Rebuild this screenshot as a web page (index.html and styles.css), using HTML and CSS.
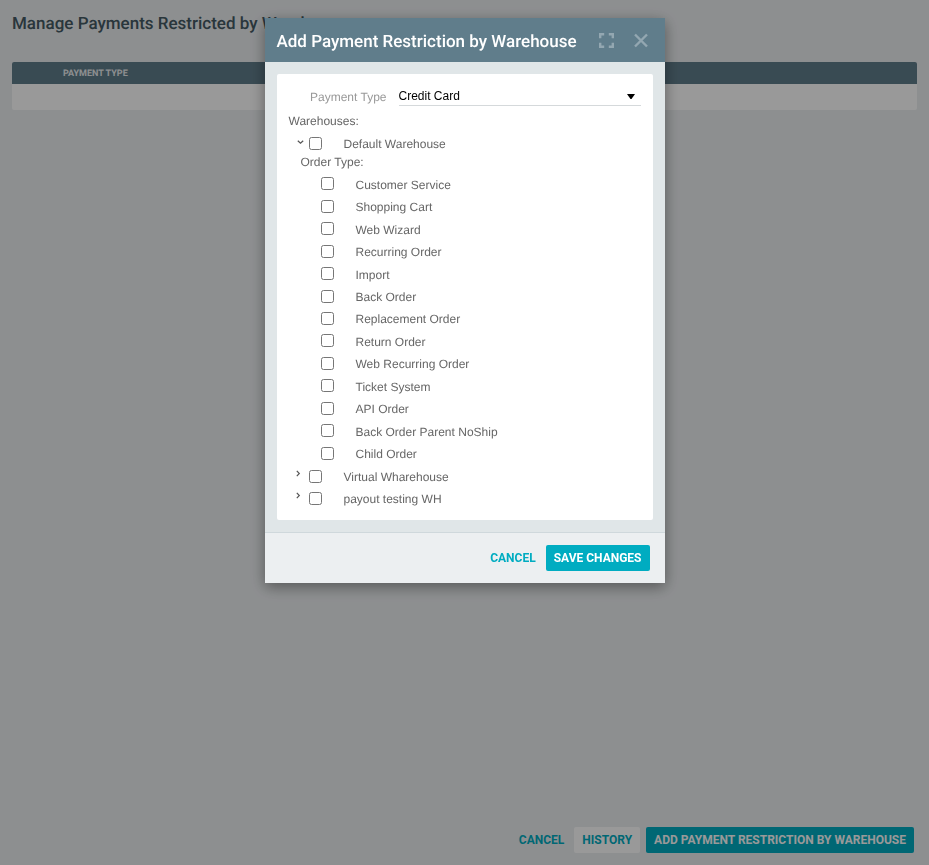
FILE: index.html
```html
<!DOCTYPE html>
<html lang="en">
<head>
<meta charset="utf-8">
<title>Manage Payments Restricted by Warehouse</title>
<link rel="stylesheet" href="styles.css">
</head>
<body>
<div class="page">
  <h1 class="page-title">Manage Payments Restricted by Warehouse</h1>
  <main class="page-main">
    <table class="grid">
      <thead><tr><th class="grid-tools"></th><th>PAYMENT TYPE</th></tr></thead>
      <tbody><tr><td></td><td></td></tr></tbody>
    </table>
  </main>
  <footer class="actions page-actions">
    <button class="btn btn-link" type="button">CANCEL</button>
    <button class="btn btn-plain" type="button">HISTORY</button>
    <button class="btn btn-primary" type="button">ADD PAYMENT RESTRICTION BY WAREHOUSE</button>
  </footer>
</div>

<div class="overlay">
  <form class="modal" role="dialog" aria-modal="true" aria-labelledby="modal-title">
    <header class="modal-header">
      <h2 class="modal-title" id="modal-title">Add Payment Restriction by Warehouse</h2>
      <button class="icon-btn" type="button" aria-label="Full screen">
        <svg width="16" height="16" viewBox="0 0 16 16"><path d="M2.2 6.2v-4h4M10.8 2.2h4v4M14.8 10.8v4h-4M6.2 14.8h-4v-4"/></svg>
      </button>
      <button class="icon-btn" type="button" aria-label="Close">
        <svg width="16" height="16" viewBox="0 0 16 16"><path d="M2 2.5l12 12M14 2.5l-12 12"/></svg>
      </button>
    </header>
    <div class="modal-body">
      <div class="card">
        <div class="field">
          <label class="field-label" for="payment-type">Payment Type</label>
          <div class="select-wrap">
            <select class="select" id="payment-type"><option>Credit Card</option></select>
            <svg class="caret" width="8" height="5" viewBox="0 0 8 5"><path d="M0 0h8L4.500 5h-1z"/></svg>
          </div>
        </div>
        <p class="caption">Warehouses:</p>
        <ul class="tree">
          <li>
            <div class="node">
              <button class="toggle toggle-open" type="button" aria-label="Collapse" aria-expanded="true"><svg width="7" height="5" viewBox="0 0 7 5"><path d="M.8.8l2.700 2.500L6.200.8"/></svg></button>
              <input type="checkbox" id="w1"><label for="w1">Default Warehouse</label>
            </div>
            <p class="subcaption">Order Type:</p>
            <ul class="leaves">
              <li class="leaf"><input type="checkbox" id="o1"><label for="o1">Customer Service</label></li>
              <li class="leaf"><input type="checkbox" id="o2"><label for="o2">Shopping Cart</label></li>
              <li class="leaf"><input type="checkbox" id="o3"><label for="o3">Web Wizard</label></li>
              <li class="leaf"><input type="checkbox" id="o4"><label for="o4">Recurring Order</label></li>
              <li class="leaf"><input type="checkbox" id="o5"><label for="o5">Import</label></li>
              <li class="leaf"><input type="checkbox" id="o6"><label for="o6">Back Order</label></li>
              <li class="leaf"><input type="checkbox" id="o7"><label for="o7">Replacement Order</label></li>
              <li class="leaf"><input type="checkbox" id="o8"><label for="o8">Return Order</label></li>
              <li class="leaf"><input type="checkbox" id="o9"><label for="o9">Web Recurring Order</label></li>
              <li class="leaf"><input type="checkbox" id="o10"><label for="o10">Ticket System</label></li>
              <li class="leaf"><input type="checkbox" id="o11"><label for="o11">API Order</label></li>
              <li class="leaf"><input type="checkbox" id="o12"><label for="o12">Back Order Parent NoShip</label></li>
              <li class="leaf"><input type="checkbox" id="o13"><label for="o13">Child Order</label></li>
            </ul>
          </li>
          <li>
            <div class="node">
              <button class="toggle" type="button" aria-label="Expand" aria-expanded="false"><svg width="5" height="7" viewBox="0 0 5 7"><path d="M.8.8l2.500 2.700L.8 6.200"/></svg></button>
              <input type="checkbox" id="w2"><label for="w2">Virtual Wharehouse</label>
            </div>
          </li>
          <li>
            <div class="node">
              <button class="toggle" type="button" aria-label="Expand" aria-expanded="false"><svg width="5" height="7" viewBox="0 0 5 7"><path d="M.8.8l2.500 2.700L.8 6.200"/></svg></button>
              <input type="checkbox" id="w3"><label for="w3">payout testing WH</label>
            </div>
          </li>
        </ul>
      </div>
    </div>
    <footer class="actions modal-actions">
      <button class="btn btn-link" type="button">CANCEL</button>
      <button class="btn btn-primary" type="submit">SAVE CHANGES</button>
    </footer>
  </form>
</div>
</body>
</html>
```
FILE: styles.css
```css
* { box-sizing: border-box; }

body {
  margin: 0;
  background: #eceff1;
  color: #666;
  font: 12px/16px "Liberation Sans", Arial, sans-serif;
  text-rendering: geometricPrecision;
}

h1, h2, p, ul { margin: 0; padding: 0; }
ul { list-style: none; }
button, select { font: inherit; cursor: pointer; }

/* Page */
.page {
  display: flex;
  flex-direction: column;
  min-height: 100vh;
}

.page-title {
  padding: 12px 12px 0;
  color: #455a64;
  font: 500 17px/24px Roboto, sans-serif;
}

.page-main { flex: 1; padding: 26px 12px 0; }

.grid {
  width: 100%;
  border-spacing: 0;
  border-radius: 2px;
  overflow: hidden;
  background: #fff;
}

.grid th {
  height: 22px;
  padding: 1px 0 0;
  background: #607d8b;
  color: #eceff1;
  font: 700 9px/16px Roboto, sans-serif;
  text-align: left;
}

.grid td { height: 26px; padding: 0; }
.grid-tools { width: 51px; }

/* Buttons */
.actions {
  display: flex;
  justify-content: flex-end;
  padding: 12px 15px;
}

.btn {
  height: 26px;
  padding: 0 8px;
  border: 0;
  border-radius: 2px;
  background: none;
  color: #00acc1;
  font: 700 12px/16px Roboto, sans-serif;
}

.btn-link { margin-right: 2px; }
.btn-plain { margin-right: 6px; background: #fff; }
.btn-primary { background: #00acc1; color: #fff; }

/* Modal */
.overlay {
  position: fixed;
  inset: 0;
  display: flex;
  align-items: flex-start;
  justify-content: center;
  padding: 18px 12px;
  background: rgba(0, 0, 0, .4);
  overflow: auto;
}

.modal {
  width: 100%;
  max-width: 400px;
  background: #e0e6e8;
  box-shadow: 0 4px 14px rgba(0, 0, 0, .4);
}

.modal-header {
  display: flex;
  align-items: center;
  gap: 19px;
  padding: 12px 16px 8px 12px;
  background: #607d8b;
}

.modal-title {
  flex: 1;
  color: #fff;
  font: 500 17px/24px Roboto, sans-serif;
  white-space: nowrap;
}

.icon-btn {
  display: flex;
  padding: 0 0 4px;
  border: 0;
  background: none;
}

.icon-btn path { fill: none; stroke: #93a7b1; stroke-width: 2.4; }

.modal-body { padding: 12px; }

.card {
  padding: 10px 12px;
  border-radius: 2px;
  background: #fff;
}

.modal-actions {
  border-top: 1px solid #cfd8dc;
  background: #eceff1;
}

/* Payment type */
.field {
  display: grid;
  grid-template-columns: 98px 1fr;
  gap: 12px;
  align-items: center;
}

.field-label { padding-top: 4px; color: #999; text-align: right; }

.select-wrap { position: relative; display: flex; }

.select {
  flex: 1;
  height: 22px;
  padding: 2px 20px 0 0;
  border: 0;
  border-bottom: 1px solid #d5d9db;
  background: none;
  color: #000;
  appearance: none;
}

.caret {
  position: absolute;
  top: 10px;
  right: 6px;
  pointer-events: none;
}

/* Warehouse tree */
.caption { margin: 7px 0 4px; }
.subcaption { padding-left: 12px; line-height: 14px; }

.node, .leaf {
  display: flex;
  align-items: center;
}

.node { height: 22px; padding-left: 7px; }
.leaf label { padding-top: 1px; }

input[type="checkbox"] {
  width: 13px;
  height: 13px;
  margin: 0 22px 1px 0;
}

.toggle {
  display: flex;
  align-self: stretch;
  width: 13px;
  padding: 4px 0 0;
  border: 0;
  background: none;
}

.toggle-open { padding-top: 7px; padding-left: 1px; }
.toggle path { fill: none; stroke: #555; stroke-width: 1.2; }

.leaves {
  display: grid;
  grid-auto-rows: 1fr;
  min-height: 292px;
  margin: 4px 0 1px;
  padding-left: 32px;
}
```
